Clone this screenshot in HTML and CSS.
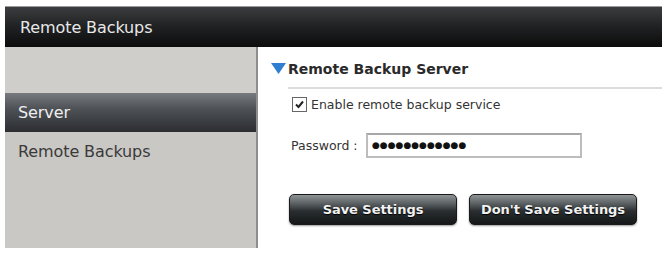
FILE: index.html
```html
<!DOCTYPE html>
<html>
<head>
<meta charset="utf-8">
<link rel="stylesheet" href="styles.css">
</head>
<body>
<div class="page">
  <div class="header">Remote Backups</div>
  <div class="main">
    <div class="sidebar">
      <div class="side-top"></div>
      <div class="side-item active">Server</div>
      <div class="side-item">Remote Backups</div>
    </div>
    <div class="content">
      <div class="section-title">
        <svg class="tri" width="15" height="11" viewBox="0 0 15 11"><polygon points="0,0 15,0 7.5,11" fill="#2f7fd0"/></svg>
        <span>Remote Backup Server</span>
      </div>
      <div class="rule"></div>
      <div class="row check-row">
        <span class="checkbox"><svg width="11" height="11" viewBox="0 0 11 11"><path d="M2 5.5 L4.5 8 L9 2.5" fill="none" stroke="#222" stroke-width="2"/></svg></span>
        <span>Enable remote backup service</span>
      </div>
      <div class="row pw-row">
        <span class="label">Password :</span>
        <div class="input">●●●●●●●●●●●●</div>
      </div>
      <div class="buttons">
        <button class="btn save">Save Settings</button>
        <button class="btn dont">Don't Save Settings</button>
      </div>
    </div>
  </div>
</div>
</body>
</html>
```
FILE: styles.css
```css
html, body { margin: 0; padding: 0; background: #fff; }
body { font-family: "DejaVu Sans", "Liberation Sans", sans-serif; width: 665px; height: 254px; overflow: hidden; }
.page { padding: 6px 3px 0 5px; }
.header {
  height: 40px;
  border-top: 1px solid #9a9a9a;
  background: linear-gradient(#3c3d40 0%, #222325 45%, #0c0c0c 100%);
  color: #e8e8e8;
  font-size: 16px;
  line-height: 41px;
  padding-left: 15px;
  letter-spacing: -0.1px;
}
.main { display: flex; height: 201px; }
.sidebar {
  width: 251px;
  background: #c9c8c4;
  border-right: 2px solid #8d8d8d;
  display: flex;
  flex-direction: column;
}
.side-top { height: 46px; background: #cfcecb; }
.side-item {
  height: 39px;
  line-height: 39px;
  padding-left: 13px;
  font-size: 16px;
  color: #3a3a3a;
  letter-spacing: -0.1px;
}
.side-item.active {
  background: linear-gradient(#777b80 0%, #4e5257 40%, #2b2d31 100%);
  color: #eeeeee;
}
.content { flex: 1; background: #fff; padding-left: 13px; }
.section-title {
  display: flex; align-items: center;
  margin-top: 14px;
  font-weight: bold; font-size: 14px; color: #2a2a2a;
}
.tri { margin-right: 2px; margin-top: -2px; }
.rule { height: 2px; background: #dcdcdc; margin: 10px 0 0 17px; }
.row { display: flex; align-items: center; font-size: 12.5px; color: #333; }
.check-row { margin-top: 8px; margin-left: 21px; }
.checkbox {
  width: 13px; height: 13px; border: 1px solid #666; background: #fff;
  display: inline-flex; align-items: center; justify-content: center; margin-right: 4px;
}
.pw-row { margin-top: 21px; margin-left: 20px; }
.label { width: 75px; }
.input {
  width: 208px; height: 21px; border: 2px solid #bdbdbd; border-top-color: #a8a8a8;
  font-size: 9px; line-height: 21px; padding-left: 4px; letter-spacing: 0px; color: #111;
}
.buttons { display: flex; gap: 12px; margin-top: 36px; margin-left: 18px; }
.btn {
  height: 31px; width: 168px;
  border: 1px solid #1a1a1a; border-radius: 5px;
  background: linear-gradient(#8e9496 0%, #5a6062 30%, #2a2e30 55%, #151718 100%);
  color: #f2f2f2; font-family: "DejaVu Sans", sans-serif; font-weight: bold; font-size: 13px;
  text-shadow: 0 1px 1px #000;
  box-shadow: 0 1px 2px rgba(0,0,0,0.4);
  letter-spacing: -0.05px;
  padding: 0;
}
```
